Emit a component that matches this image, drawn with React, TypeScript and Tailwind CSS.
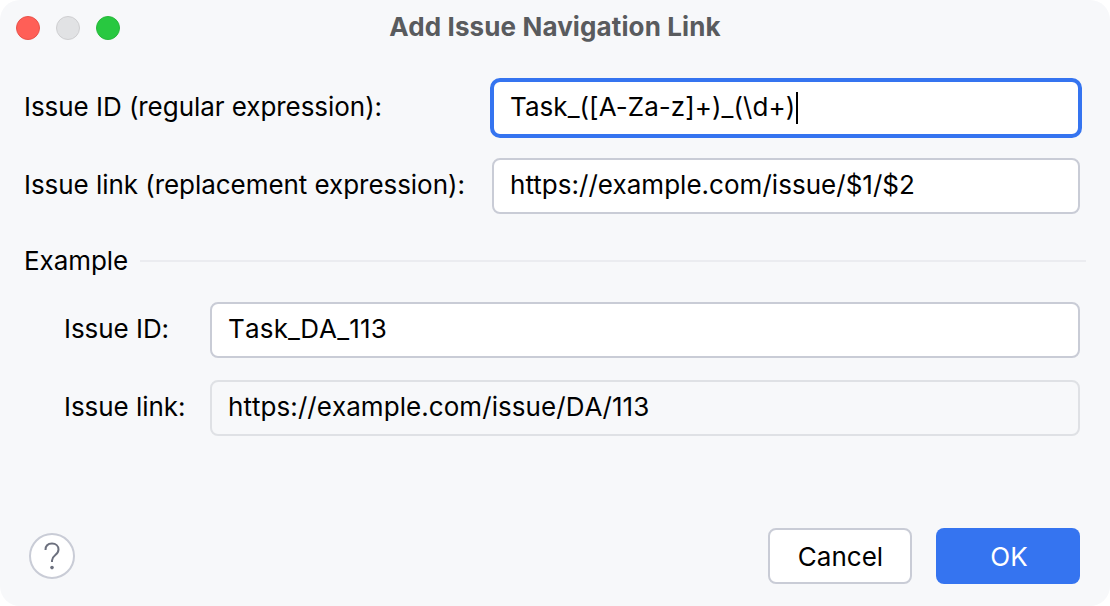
import React from "react";

function Field({ value, className = "" }: { value: string; className?: string }) {
  return (
    <div className={`flex h-[56px] items-center rounded-[8px] border-2 pb-[3px] pl-[16px] text-[26px] text-[#000000] ${className}`}>
      {value}
    </div>
  );
}

const labelClass = "flex-none pb-[3px] text-[26px] tracking-[-0.05px] text-[#000000]";

export default function App() {
  return (
    <div className="h-[606px] w-[1110px] bg-white font-['Inter',sans-serif]">
      <div className="flex h-full w-full flex-col rounded-[20px] bg-[#f7f8fa]">
        {/* Title bar */}
        <div className="relative flex h-[56px] flex-none items-center justify-center">
          <div className="absolute left-[16px] top-[16px] flex gap-[16px]">
            <span className="h-[24px] w-[24px] rounded-full border border-[#e9524a] bg-[#ff5f57]" />
            <span className="h-[24px] w-[24px] rounded-full border border-[#cfcfd1] bg-[#e1e2e4]" />
            <span className="h-[24px] w-[24px] rounded-full border border-[#27b83a] bg-[#28c840]" />
          </div>
          <span className="pb-[2px] text-[26px] font-bold leading-none tracking-[0.12px] text-[#595b5e]">Add Issue Navigation Link</span>
        </div>

        {/* Form */}
        <div className="flex flex-1 flex-col pl-[24px] pr-[30px]">
          <div className="mt-[24px] flex items-center">
            <span className={`w-[468px] ${labelClass}`}>Issue ID (regular expression):</span>
            <div className="flex h-[56px] flex-1 items-center rounded-[8px] bg-white pb-[3px] pl-[18px] text-[26px] tracking-[0.05px] text-[#000000] outline-[4px] outline-[#3574f0] outline-offset-[-2px]">
              Task_([A-Za-z]+)_(\d+)
              <span className="ml-[1px] mt-[3px] h-[32px] w-[2px] bg-black" />
            </div>
          </div>
          <div className="mt-[22px] flex items-center">
            <span className={`w-[468px] ${labelClass}`}>Issue link (replacement expression):</span>
            <Field value="https://example.com/issue/$1/$2" className="flex-1 border-[#c9ccd6] bg-white tracking-[0.03px]" />
          </div>

          <div className="mt-[32px] flex items-center">
            <span className="text-[26px] leading-[30px] tracking-[-0.05px] text-[#000000]">Example</span>
            <div className="ml-[12px] mr-[-6px] h-[2px] flex-1 bg-[#ebecf0]" />
          </div>

          <div className="mt-[26px] flex items-center pl-[40px]">
            <span className={`w-[146px] ${labelClass}`}>Issue ID:</span>
            <Field value="Task_DA_113" className="flex-1 border-[#c9ccd6] bg-white tracking-[0.18px] [font-kerning:none]" />
          </div>
          <div className="mt-[22px] flex items-center pl-[40px]">
            <span className={`w-[146px] ${labelClass}`}>Issue link:</span>
            <Field value="https://example.com/issue/DA/113" className="flex-1 border-[#dfe1e5] bg-[#f7f8fa] tracking-[0.06px] [font-kerning:none]" />
          </div>
        </div>

        {/* Footer */}
        <div className="flex flex-none items-center justify-between pb-[22px] pl-[29px] pr-[30px]">
          <div className="flex h-[46px] w-[46px] items-center justify-center rounded-full border-2 border-[#c9ccd6] bg-white">
            <svg width="16" height="28" viewBox="0 0 16 28" fill="none">
              <path d="M1.5 8C1.5 4 4 1.5 8 1.5c3.8 0 6.5 2.5 6.5 6 0 3-1.6 4.4-3.4 5.8-2 1.6-3.1 3-3.1 5.2v1.5" stroke="#6c707e" strokeWidth="2" />
              <circle cx="8" cy="25.6" r="1.8" fill="#6c707e" />
            </svg>
          </div>
          <div className="flex gap-[24px]">
            <button className="flex h-[56px] w-[144px] items-center justify-center rounded-[8px] border-2 border-[#c9ccd6] bg-white pl-[1px] text-[26px] text-[#000000]">
              Cancel
            </button>
            <button className="flex h-[56px] w-[144px] items-center justify-center rounded-[8px] bg-[#3574f0] pl-[2px] text-[26px] text-white">
              OK
            </button>
          </div>
        </div>
      </div>
    </div>
  );
}
